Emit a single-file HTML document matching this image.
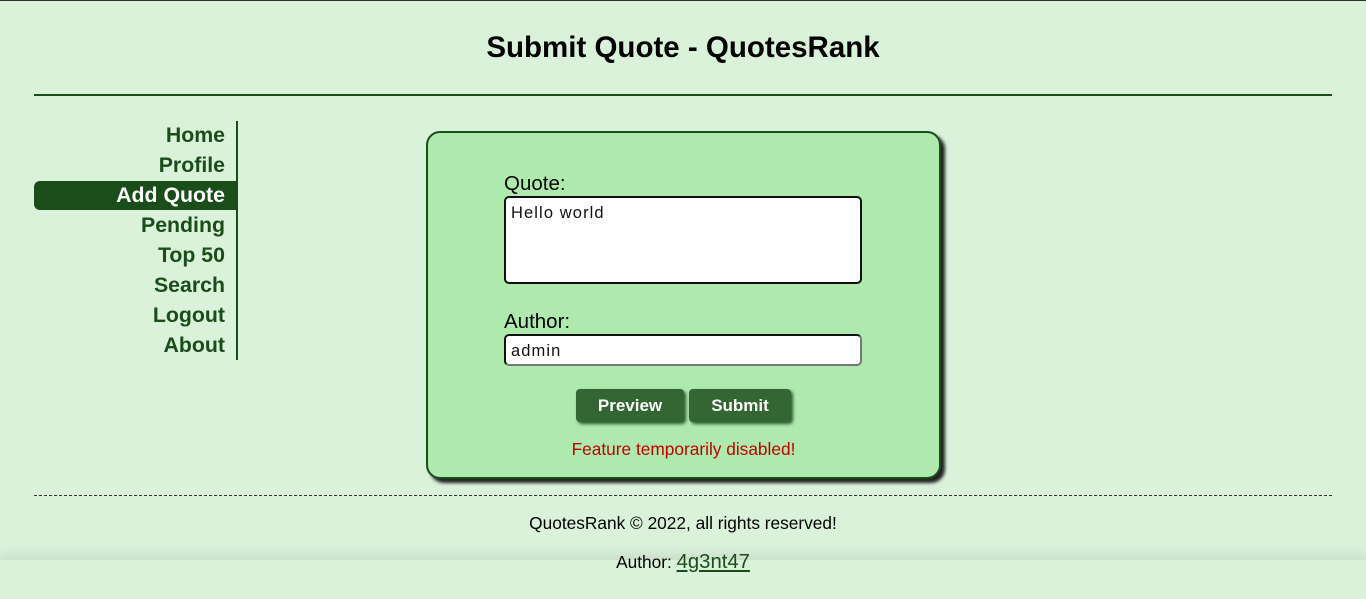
<!DOCTYPE html>
<html><head><meta charset="utf-8"><style>
*{margin:0;padding:0;box-sizing:border-box}
body{width:1366px;height:599px;background:#daf1da;font-family:"Liberation Sans",Arial,sans-serif;position:relative;overflow:hidden}
.a{position:absolute}
h1{position:absolute;top:31px;left:0;width:1366px;text-align:center;font-size:29.5px;font-weight:bold;color:#000}
.hr{left:34px;top:94px;width:1298px;height:2px;background:#1a4d1a}
.nav{left:34px;top:121px;width:204px;height:239px;border-right:2px solid #1a4d1a}
.nav div{height:30px;line-height:29px;text-align:right;padding-right:11px;font-size:21.3px;font-weight:bold;color:#1a4d1a}
.nav div.on{background:#1a4d1a;color:#fff;border-radius:6px 0 0 6px;height:29px;margin-bottom:1px}
.box{left:426px;top:131px;width:515px;height:348px;background:#aeeaae;border:2px solid #1a4d1a;border-radius:14px;box-shadow:4px 4px 3px #222}
.lbl{font-size:20.5px;color:#000}
.inp{background:#fff;border:2px solid #111;border-radius:5px;font-size:16.5px;letter-spacing:1.1px;padding:5px 5px;color:#111}
.btn{background:#336633;color:#fff;font-weight:bold;font-size:17px;text-align:center;line-height:33px;height:33px;border-radius:4px;box-shadow:2px 2px 3px #2a5a2a}
</style></head><body>
<div class="a" style="left:0;top:0;width:1366px;height:1px;background:#2a2f3a"></div>
<h1>Submit Quote - QuotesRank</h1>
<div class="a hr"></div>
<div class="a nav">
<div>Home</div><div>Profile</div><div class="on">Add Quote</div><div>Pending</div><div>Top 50</div><div>Search</div><div>Logout</div><div>About</div>
</div>
<div class="a box"></div>
<div class="a lbl" style="left:504px;top:172px">Quote:</div>
<div class="a inp" style="left:504px;top:196px;width:358px;height:88px;padding-top:6px">Hello world</div>
<div class="a lbl" style="left:504px;top:310px">Author:</div>
<div class="a inp" style="left:504px;top:334px;width:358px;height:32px;padding-top:6px;border-bottom-color:#777;border-right-color:#777">admin</div>
<div class="a btn" style="left:576px;top:389px;width:108px">Preview</div>
<div class="a btn" style="left:689px;top:389px;width:102px">Submit</div>
<div class="a" style="left:426px;width:515px;top:439px;text-align:center;font-size:17.3px;color:#c00000">Feature temporarily disabled!</div>
<div class="a" style="left:34px;top:495px;width:1298px;border-top:1px dashed #333"></div>
<div class="a" style="left:0;width:1366px;top:513px;text-align:center;font-size:17.3px;color:#000">QuotesRank © 2022, all rights reserved!</div>
<div class="a" style="left:0;top:560px;width:1366px;height:39px;background:#daf1da;box-shadow:0 -6px 10px rgba(0,0,0,.08)"></div>
<div class="a" style="left:0;width:1366px;top:551px;text-align:center;font-size:17.3px;color:#000">Author: <span style="font-size:20.3px;color:#1a4d1a;text-decoration:underline">4g3nt47</span></div>
</body></html>
